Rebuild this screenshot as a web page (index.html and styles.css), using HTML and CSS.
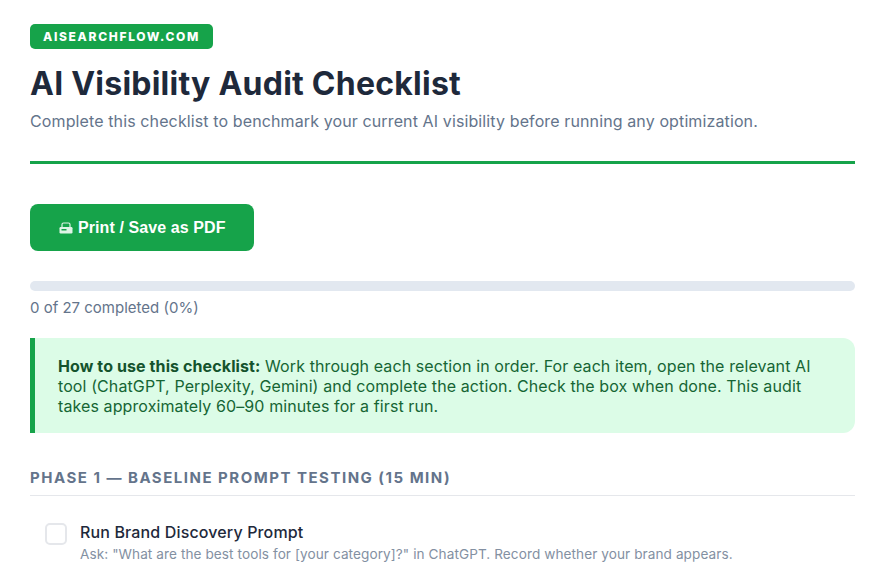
FILE: index.html
```html
<!DOCTYPE html>
<html lang="en">
  <head>
    <meta charset="UTF-8" />
    <title>AI Visibility Audit Checklist</title>
    <link rel="stylesheet" href="styles.css">
  </head>
  <body>
    <div class="container">
      <header class="page-header">
        <span class="badge">AISEARCHFLOW.COM</span>
        <h1>AI Visibility Audit Checklist</h1>
        <p class="subtitle">Complete this checklist to benchmark your current AI visibility before running any optimization.</p>
      </header>

      <button class="print-button">
        <svg class="print-icon" width="14" height="12" viewBox="0 0 14 12">
          <path d="M3 6V2.5Q3 1 4.5 1h5Q11 1 11 2.5V6" fill="none" stroke="#dff3e6" stroke-width="1.2" />
          <rect x="0.5" y="5" width="13" height="6.5" rx="1.2" fill="#dff3e6" />
          <rect x="2.5" y="7" width="5" height="1.5" fill="#16a34a" />
        </svg>
        Print / Save as PDF
      </button>

      <div class="progress-track"><div class="progress-fill"></div></div>
      <p class="progress-text">0 of 27 completed (0%)</p>

      <div class="intro-box">
        <strong>How to use this checklist:</strong> Work through each section in order. For each item, open the relevant AI tool (ChatGPT, Perplexity, Gemini) and complete the action. Check the box when done. This audit takes approximately 60–90 minutes for a first run.
      </div>

      <h2 class="phase-title">Phase 1 — Baseline Prompt Testing (15 min)</h2>

      <div class="check-item">
        <span class="checkbox"></span>
        <div>
          <div class="item-title">Run Brand Discovery Prompt</div>
          <div class="item-desc">Ask: "What are the best tools for [your category]?" in ChatGPT. Record whether your brand appears.</div>
        </div>
      </div>
    </div>
  </body>
</html>
```

FILE: styles.css
```css
html,
body {
  height: 100%;
}
body {
  margin: 0;
  overflow: hidden;
  font-family: Inter, "Liberation Sans", sans-serif;
  background-color: #ffffff;
  color: #1e293b;
}
.container {
  padding: 24px 25px 0 30px;
}
.page-header {
  padding-bottom: 28px;
  border-bottom: 3px solid #16a34a;
  margin-bottom: 40px;
}
.badge {
  display: inline-block;
  padding: 0 13px;
  height: 25px;
  line-height: 25px;
  border-radius: 5px;
  background-color: #16a34a;
  color: #ffffff;
  font-size: 12px;
  font-weight: 800;
  letter-spacing: 1.68px;
  vertical-align: top;
}
h1 {
  margin: 13px 0 3px;
  font-size: 32px;
  line-height: 44px;
  font-weight: 700;
  letter-spacing: 0.24px;
  color: #1e293b;
}
.subtitle {
  margin: 0;
  font-size: 16px;
  line-height: 24px;
  letter-spacing: 0.116px;
  color: #64748b;
}
.print-button {
  display: block;
  width: 224px;
  height: 47px;
  padding: 1px 0 0 1px;
  border: none;
  border-radius: 8px;
  background-color: #16a34a;
  color: #ffffff;
  font-family: "Liberation Sans", Arial, sans-serif;
  font-size: 16px;
  font-weight: 700;
  letter-spacing: 0.1px;
  cursor: pointer;
}
.print-icon {
  vertical-align: -1px;
}
.progress-track {
  height: 10px;
  margin-top: 30px;
  border-radius: 5px;
  background-color: #e2e8f0;
}
.progress-fill {
  width: 0;
  height: 100%;
  background-color: #16a34a;
}
.progress-text {
  margin: 7px 0 0;
  font-size: 15px;
  line-height: 20px;
  color: #64748b;
}
.intro-box {
  margin-top: 20px;
  padding: 18px 24px 17px 23px;
  border-left: 5px solid #16a34a;
  border-radius: 0 12px 12px 0;
  background-color: #dcfce7;
  color: #166534;
  font-size: 16px;
  line-height: 20px;
  letter-spacing: 0.1px;
}
.intro-box strong {
  color: #14532d;
}
.phase-title {
  margin: 35px 0 0;
  padding-bottom: 7px;
  border-bottom: 1px solid #e5e7eb;
  font-size: 15px;
  line-height: 20px;
  font-weight: 700;
  letter-spacing: 1.5px;
  text-transform: uppercase;
  color: #64748b;
}
.check-item {
  display: flex;
  gap: 13px;
  padding: 24px 15px 0;
}
.checkbox {
  flex: none;
  width: 22px;
  height: 22px;
  margin-top: 3px;
  box-sizing: border-box;
  border: 2px solid #e5e7eb;
  border-radius: 5px;
  background-color: #ffffff;
}
.item-title {
  font-size: 16px;
  line-height: 24px;
  font-weight: 500;
  letter-spacing: 0.14px;
  color: #1e293b;
}
.item-desc {
  font-size: 13.6px;
  line-height: 20px;
  letter-spacing: 0.08px;
  color: #8390a2;
}
```
